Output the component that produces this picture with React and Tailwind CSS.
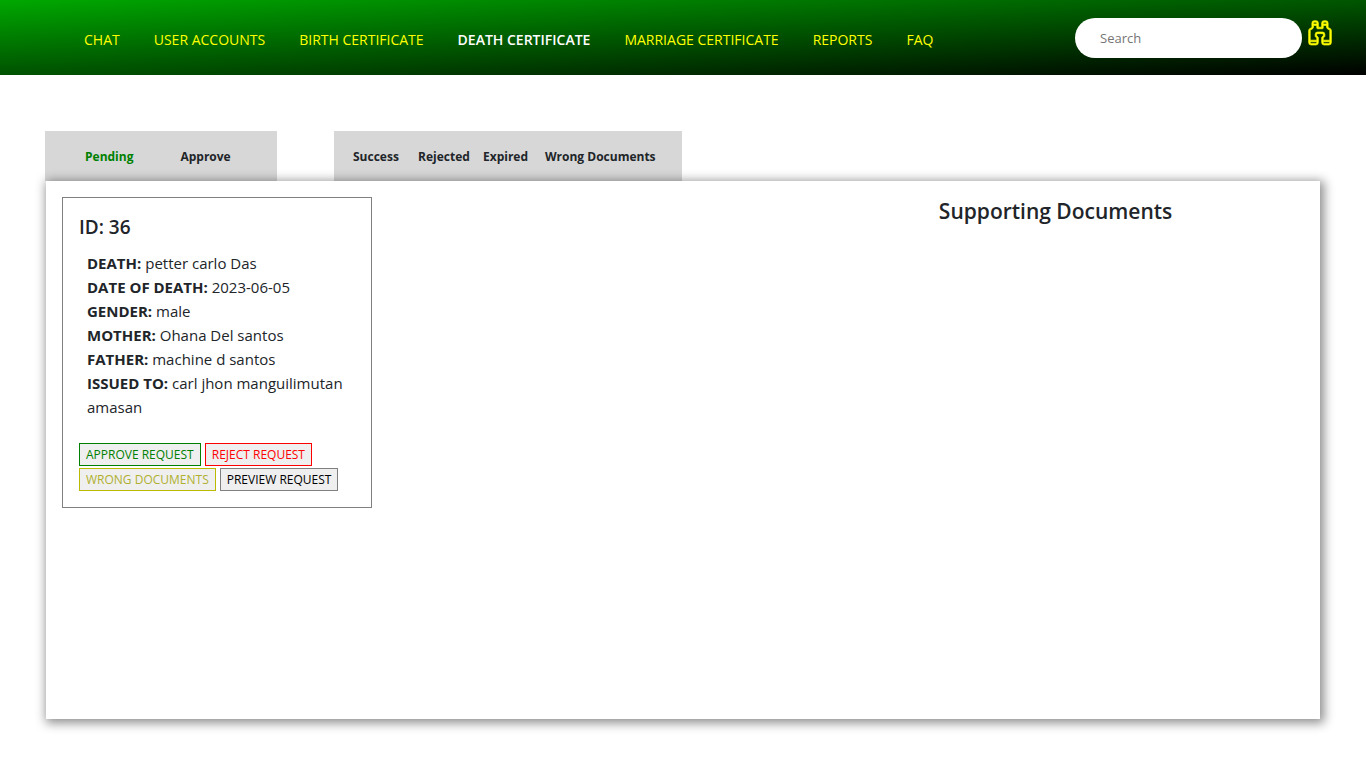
import { BsBinoculars } from "react-icons/bs";

const navLinks = [
  "CHAT",
  "USER ACCOUNTS",
  "BIRTH CERTIFICATE",
  "DEATH CERTIFICATE",
  "MARRIAGE CERTIFICATE",
  "REPORTS",
  "FAQ",
];

const details = [
  ["DEATH:", "petter carlo Das"],
  ["DATE OF DEATH:", "2023-06-05"],
  ["GENDER:", "male"],
  ["MOTHER:", "Ohana Del santos"],
  ["FATHER:", "machine d santos"],
  ["ISSUED TO:", "carl jhon manguilimutan amasan"],
];

const actions = [
  ["APPROVE REQUEST", "border-[#008000] text-[#008000]"],
  ["REJECT REQUEST", "border-[#ff0000] text-[#ff0000]"],
  ["WRONG DOCUMENTS", "border-[#baba00] text-[#b0b030]"],
  ["PREVIEW REQUEST", "border-[#808080] text-black"],
];

function Header() {
  return (
    <header className="flex h-[75px] items-center justify-between bg-[linear-gradient(177deg,#00a800,#000000)] pr-[33px] pl-[84px]">
      <nav aria-label="Main" className="pt-1">
        <ul className="flex gap-[34px] text-[14px] leading-5 whitespace-nowrap">
          {navLinks.map((label) => (
            <li key={label}>
              <a
                href="#"
                className={
                  label === "DEATH CERTIFICATE"
                    ? "font-semibold text-white"
                    : "text-[#ffff00]"
                }
              >
                {label}
              </a>
            </li>
          ))}
        </ul>
      </nav>
      <form className="flex items-center gap-[5px]" role="search">
        <input
          type="search"
          aria-label="Search"
          placeholder="Search"
          className="h-10 w-[227px] rounded-full bg-white px-[25px] text-[13px] text-[#212529] outline-none placeholder:text-[#757575]"
        />
        <button type="button" aria-label="Find" className="mb-3 text-[#ffff00]">
          <BsBinoculars className="size-[26px] overflow-visible stroke-current [stroke-width:0.4px]" />
        </button>
      </form>
    </header>
  );
}

function Tabs() {
  return (
    <div className="-ml-px flex gap-[57px] text-[12px] leading-5 font-bold text-[#212529]">
      <div className="flex h-[50px] w-[232px] items-center gap-[47px] bg-[#d7d7d7] pt-0.5 pl-10">
        <button type="button" className="text-[#008000]">Pending</button>
        <button type="button">Approve</button>
      </div>
      <div className="flex h-[50px] w-[348px] items-center bg-[#d7d7d7] pt-0.5 pl-[19px]">
        <button type="button" className="w-[65px] text-left">Success</button>
        <button type="button" className="w-[65px] text-left">Rejected</button>
        <button type="button" className="w-[62px] text-left">Expired</button>
        <button type="button" className="text-left">Wrong Documents</button>
      </div>
    </div>
  );
}

function RequestCard() {
  return (
    <article className="w-[310px] border border-[#808080] p-4">
      <h2 className="text-[19px] leading-[26px] font-semibold">ID: 36</h2>
      <div className="mt-[11px] px-2 text-[15px] leading-6">
        {details.map(([term, value]) => (
          <p key={term}>
            <b className="font-bold">{term}</b> {value}
          </p>
        ))}
      </div>
      <div className="mt-6 flex flex-wrap gap-x-1 gap-y-0.5">
        {actions.map(([label, tone]) => (
          <button
            key={label}
            type="button"
            className={`h-[23px] border bg-[#efefef] px-1.5 text-[12px] leading-5 whitespace-nowrap ${tone}`}
          >
            {label}
          </button>
        ))}
      </div>
    </article>
  );
}

export default function App() {
  return (
    <div className="min-h-screen bg-white font-['Open_Sans','Noto_Sans',sans-serif] text-[#212529]">
      <Header />
      <main className="mx-[46px] pt-14 pb-12">
        <Tabs />
        <section className="relative flex min-h-[538px] items-start justify-between bg-white p-4 shadow-[2px_2px_10px_2px_rgba(0,0,0,0.45)]">
          <RequestCard />
          <aside className="w-2/5 text-center">
            <h1 className="text-[21px] leading-7 font-semibold">Supporting Documents</h1>
          </aside>
        </section>
      </main>
    </div>
  );
}
